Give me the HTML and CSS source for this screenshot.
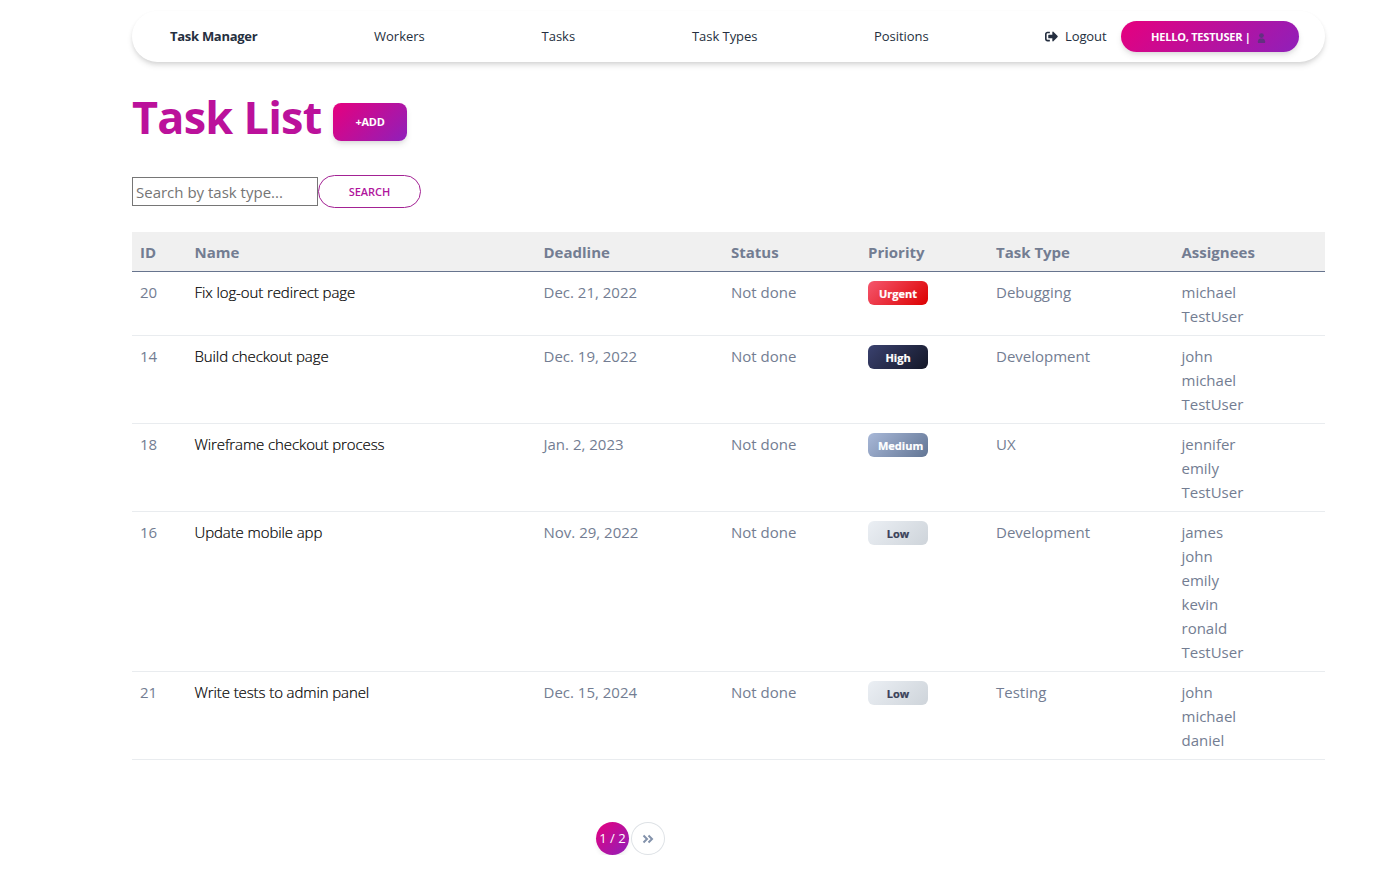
FILE: index.html
```html
<!DOCTYPE html>
<html lang="en">
<head>
<meta charset="utf-8">
<title>Task List</title>
<link rel="stylesheet" href="styles.css">
</head>
<body>
<div class="container">
  <nav class="navbar">
    <a class="brand">Task Manager</a>
    <a class="link workers">Workers</a>
    <a class="link tasks">Tasks</a>
    <a class="link types">Task Types</a>
    <a class="link positions">Positions</a>
    <a class="link logout"><svg class="logout-icon" viewBox="0 0 512 512"><path d="M497 273L329 441c-15 15-41 4.500-41-17v-96H152c-13.300 0-24-10.700-24-24v-96c0-13.300 10.700-24 24-24h136V88c0-21.400 25.900-32 41-17l168 168c9.300 9.400 9.300 24.600 0 34zM192 436v-40c0-6.600-5.400-12-12-12H96c-17.700 0-32-14.300-32-32V160c0-17.700 14.300-32 32-32h84c6.600 0 12-5.400 12-12V76c0-6.600-5.400-12-12-12H96c-53 0-96 43-96 96v192c0 53 43 96 96 96h84c6.600 0 12-5.400 12-12z"/></svg>Logout</a>
    <a class="hello">Hello, TestUser | <svg class="user-icon" viewBox="0 0 10 12"><circle cx="5" cy="3.300" r="2.600"/><path d="M1 11.500V9.500Q1 7 3.500 6.500h3Q9 7 9 9.500v2z"/></svg></a>
  </nav>
  <header class="heading"><h1>Task List</h1><a class="add">+Add</a></header>
  <form class="search"><input class="field" type="text" placeholder="Search by task type..."><button class="search-btn" type="button">Search</button></form>
  <main class="table">
    <div class="row head"><span>ID</span><span>Name</span><span>Deadline</span><span>Status</span><span>Priority</span><span>Task Type</span><span>Assignees</span></div>
    <div class="row"><span>20</span><span class="name">Fix log-out redirect page</span><span>Dec. 21, 2022</span><span>Not done</span><span><b class="badge urgent">Urgent</b></span><span>Debugging</span><span>michael<br>TestUser</span></div>
    <div class="row"><span>14</span><span class="name">Build checkout page</span><span>Dec. 19, 2022</span><span>Not done</span><span><b class="badge high">High</b></span><span>Development</span><span>john<br>michael<br>TestUser</span></div>
    <div class="row"><span>18</span><span class="name">Wireframe checkout process</span><span>Jan. 2, 2023</span><span>Not done</span><span><b class="badge medium">Medium</b></span><span>UX</span><span>jennifer<br>emily<br>TestUser</span></div>
    <div class="row"><span>16</span><span class="name">Update mobile app</span><span>Nov. 29, 2022</span><span>Not done</span><span><b class="badge low">Low</b></span><span>Development</span><span>james<br>john<br>emily<br>kevin<br>ronald<br>TestUser</span></div>
    <div class="row"><span>21</span><span class="name">Write tests to admin panel</span><span>Dec. 15, 2024</span><span>Not done</span><span><b class="badge low">Low</b></span><span>Testing</span><span>john<br>michael<br>daniel</span></div>
  </main>
  <div class="pagination"><a class="page active">1 / 2</a><a class="page"><svg class="next-icon" viewBox="0 0 12 10"><path d="M1.500 1.500 5 5 1.500 8.500M6.500 1.500 10 5 6.500 8.500"/></svg></a></div>
</div>
</body>
</html>
```
FILE: styles.css
```css
* { box-sizing: border-box; }
body { margin: 0; background: #fff; color: #737d92; font: 400 15px/24px "Open Sans", sans-serif; }
.container { width: 1193px; margin-left: 132px; padding-top: 11px; }
.navbar { display: flex; align-items: center; height: 51px; padding: 0 26px 0 38px; border-radius: 26px; box-shadow: 0 4px 6px -1px rgba(20,20,20,.12), 0 2px 4px -1px rgba(20,20,20,.1); color: #252f40; font-size: 13px; white-space: nowrap; }
.brand, .link { padding-bottom: 2px; }
.brand { width: 204px; font-weight: 700; font-size: 13px; letter-spacing: -.28px; }
.workers { width: 167.500px; }
.tasks { width: 150.500px; }
.types { width: 182px; letter-spacing: -.05px; }
.positions { width: 171px; letter-spacing: -.05px; }
.logout { width: 76px; display: flex; align-items: center; gap: 7px; letter-spacing: -.1px; }
.logout-icon { width: 13px; height: 13px; margin-top: 1px; fill: currentColor; }
.hello { display: flex; align-items: center; width: 178px; height: 31px; padding-left: 30px; border-radius: 16px; color: #fff; background: linear-gradient(135deg, #e6007e, #8f20ba); box-shadow: 0 4px 7px -1px rgba(0,0,0,.11), 0 2px 4px -1px rgba(0,0,0,.07); font-size: 11px; font-weight: 700; letter-spacing: -.22px; text-transform: uppercase; }
.user-icon { width: 9px; height: 12px; margin: 2px 0 0 6px; fill: #633080; }
.heading { display: flex; margin-top: 25px; height: 61px; }
h1 { width: 201px; margin: 0; color: #bb119b; font-size: 45px; line-height: 60px; font-weight: 700; letter-spacing: -.75px; white-space: nowrap; }
.add { width: 74px; height: 38px; margin-top: 16px; border-radius: 8px; background: linear-gradient(135deg, #e6007e, #8f20ba); box-shadow: 0 4px 7px -1px rgba(0,0,0,.11), 0 2px 4px -1px rgba(0,0,0,.07); color: #fff; font-size: 11px; line-height: 38px; font-weight: 700; letter-spacing: -.3px; text-align: center; text-transform: uppercase; }
.search { display: flex; align-items: center; height: 33px; margin: 27px 0 24px; }
.field { width: 186px; height: 29px; padding: 1px 3px; border: 1px solid #767676; border-radius: 0; background: #fff; font: 15px "Open Sans", sans-serif; }
.field::placeholder { color: #757575; }
.search-btn { width: 103px; height: 33px; padding: 0; border: 1px solid #a32294; border-radius: 17px; background: #fff; color: #b0159d; font: 600 11px "Open Sans", sans-serif; text-transform: uppercase; }
.row { display: grid; grid-template-columns: 54.500px 349px 187.500px 137px 128px 185.500px 151.500px; padding-top: 8px; padding-bottom: 7px; border-bottom: 1px solid #e9ecef; }
.row > span { padding: 0 8px; white-space: nowrap; }
.head { background: #f0f0f0; border-color: #67748e; font-weight: 700; }
.row > .name { color: #000; font-weight: 300; letter-spacing: -.1px; -webkit-text-stroke: .2px #000; }
.badge { display: block; width: 60px; height: 24px; margin: 1px 0 -1px; padding: 0 10px; border-radius: 6px; color: #fff; font-size: 11px; line-height: 25px; font-weight: 700; text-align: center; -webkit-text-stroke: .2px currentColor; }
.urgent { background: linear-gradient(135deg, #f5576e, #dc0000); }
.high { background: linear-gradient(135deg, #3a416f, #141727); }
.medium { background: linear-gradient(135deg, #a8b8d8, #627594); }
.low { background: linear-gradient(135deg, #ebeff4, #ced4da); color: #3a4159; }
.pagination { display: flex; gap: 2px; margin: 62px 0 0 464px; }
.page { display: flex; align-items: center; justify-content: center; width: 34px; height: 33px; border: 1px solid #dee2e6; border-radius: 50%; color: #8392ab; font-size: 13px; white-space: nowrap; }
.active { width: 33px; padding-bottom: 1px; border: 0; color: #fff; background: linear-gradient(135deg, #e6007e, #8f20ba); box-shadow: 0 3px 5px -1px rgba(0,0,0,.09); }
.next-icon { width: 12px; height: 10px; fill: none; stroke: #8392ab; stroke-width: 2; }
```
